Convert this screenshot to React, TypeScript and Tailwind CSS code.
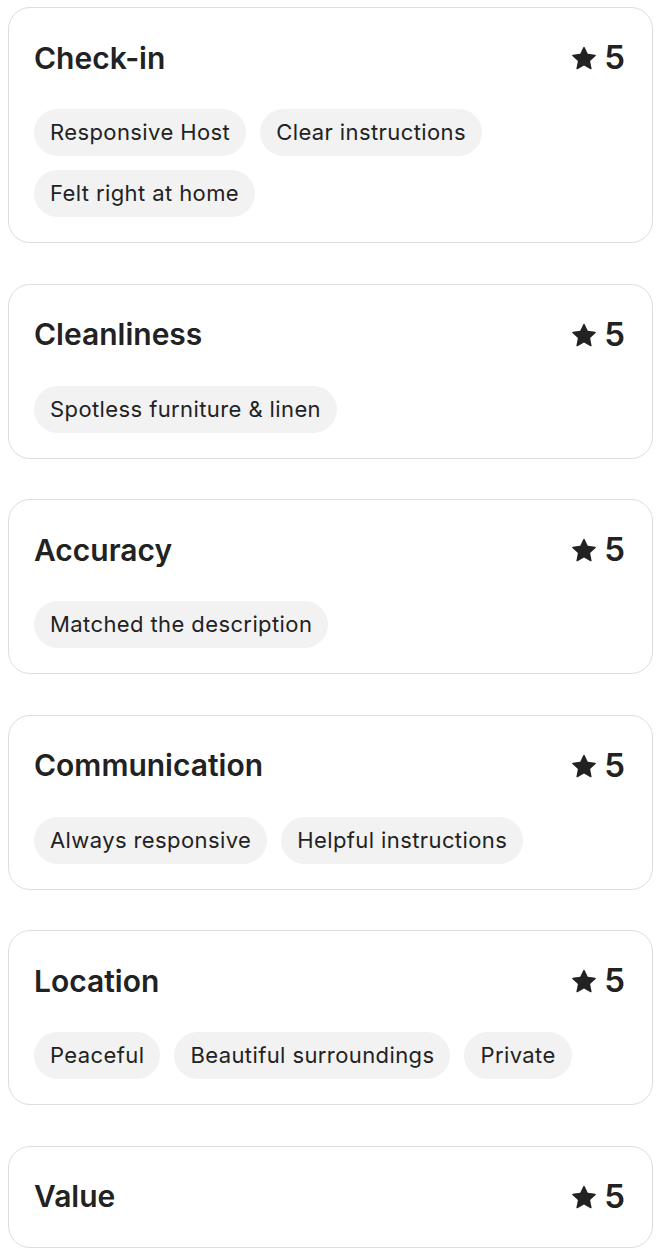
const categories = [
  { name: "Check-in", rating: 5, tags: ["Responsive Host", "Clear instructions", "Felt right at home"] },
  { name: "Cleanliness", rating: 5, tags: ["Spotless furniture & linen"] },
  { name: "Accuracy", rating: 5, tags: ["Matched the description"] },
  { name: "Communication", rating: 5, tags: ["Always responsive", "Helpful instructions"] },
  { name: "Location", rating: 5, tags: ["Peaceful", "Beautiful surroundings", "Private"] },
  { name: "Value", rating: 5, tags: [] as string[] },
];

function Star() {
  return (
    <svg viewBox="0 0 32 32" className="h-[24px] w-[24px]" fill="currentColor">
      <path d="M15.1 1.58l-4.13 8.88-9.86 1.27a1 1 0 0 0-.54 1.74l7.3 6.57-1.97 9.85a1 1 0 0 0 1.48 1.06l8.62-5 8.63 5a1 1 0 0 0 1.48-1.06l-1.97-9.85 7.3-6.57a1 1 0 0 0-.55-1.73l-9.86-1.28-4.12-8.88a1 1 0 0 0-1.82 0z" />
    </svg>
  );
}

export default function App() {
  return (
    <div
      className="flex min-h-[1251px] flex-col gap-[40.5px] bg-white pl-[8px] pr-[7px] pt-[7px] text-[#222222]"
      style={{ fontFamily: "Inter, 'Noto Sans', sans-serif" }}
    >
      {categories.map((c) => (
        <div
          key={c.name}
          className={`rounded-[22px] border-[1.5px] border-[#dddddd] px-[25px] pt-[30px] ${
            c.tags.length > 0 ? "pb-[25px]" : "pb-[30px]"
          }`}
        >
          <div className="flex h-[40px] items-center justify-between">
            <h2 className="text-[30px] font-semibold">{c.name}</h2>
            <div className="flex items-center gap-[8px] pr-[2px]">
              <Star />
              <span className="text-[33px] font-semibold">{c.rating}</span>
            </div>
          </div>
          {c.tags.length > 0 && (
            <div className="mt-[31px] flex flex-wrap gap-[14px]">
              {c.tags.map((t) => (
                <span
                  key={t}
                  className="flex h-[47px] items-center rounded-full bg-[#f2f2f2] px-[16px] text-[22px] tracking-[0.4px]"
                >
                  {t}
                </span>
              ))}
            </div>
          )}
        </div>
      ))}
    </div>
  );
}
